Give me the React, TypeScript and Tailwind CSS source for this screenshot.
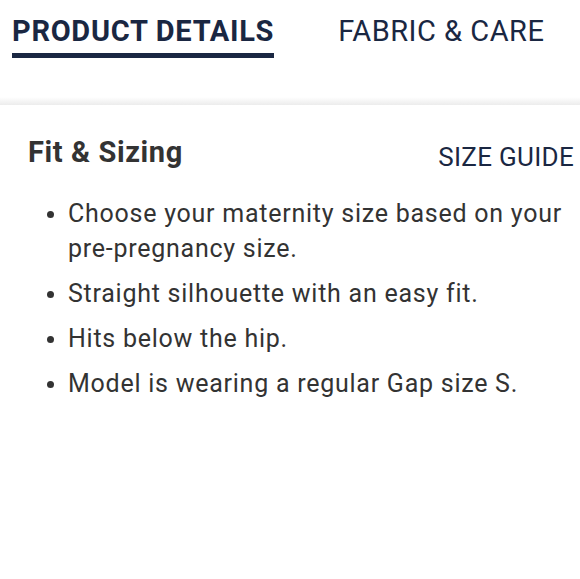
import React from "react";

const fitNotes = [
  "Choose your maternity size based on your pre-pregnancy size.",
  "Straight silhouette with an easy fit.",
  "Hits below the hip.",
  "Model is wearing a regular Gap size S.",
];

export default function App() {
  return (
    <div className="min-h-screen w-full bg-white font-['Roboto',sans-serif]">
      {/* tabs */}
      <div className="flex h-[97px] items-start gap-[64px] pl-[12px] pt-[14px]">
        <div className="flex flex-col">
          <span className="text-[29px] font-bold leading-[34px] tracking-[0.7px] text-[#1a2742]">PRODUCT DETAILS</span>
          <div className="mt-[5px] h-[5px] w-full bg-[#1a2742]" />
        </div>
        <span className="text-[29px] leading-[34px] tracking-[0.5px] text-[#1a2742]">FABRIC &amp; CARE</span>
      </div>
      <div className="h-[8px] w-full bg-gradient-to-b from-white to-[#ececec]" />

      {/* fit & sizing */}
      <div className="pl-[28px] pr-[6px] pt-[31px]">
        <div className="flex items-start justify-between">
          <h2 className="text-[29px] font-bold leading-[32px] tracking-[0.6px] text-[#333333]">Fit &amp; Sizing</h2>
          <button className="mt-[5px] text-[26px] leading-[32px] tracking-[0.3px] text-[#1a2742]">SIZE GUIDE</button>
        </div>
        <ul className="mt-[23px] flex flex-col gap-[10px] pl-[19px]">
          {fitNotes.map((note) => (
            <li key={note} className="flex items-start gap-[14px] text-[25px] leading-[35px] tracking-[0.75px] text-[#333333]">
              <span className="mt-[15px] h-[7px] w-[7px] shrink-0 rounded-full bg-[#333333]" />
              <span>{note}</span>
            </li>
          ))}
        </ul>
      </div>
    </div>
  );
}
